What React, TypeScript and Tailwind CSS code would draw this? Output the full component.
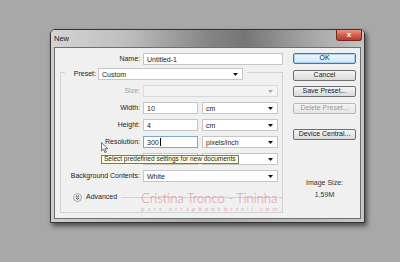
function Arrow({ disabled = false }: { disabled?: boolean }) {
  return (
    <svg width="5" height="3" viewBox="0 0 5 3" className="shrink-0">
      <path d="M0 0 L5 0 L2.5 3 Z" fill={disabled ? '#a8a8a8' : '#111'} />
    </svg>
  );
}

function Select({ value, w, disabled = false }: { value: string; w: string; disabled?: boolean }) {
  return (
    <div
      className={`${w} h-[12px] flex items-center justify-between pl-[3px] pr-[4px] border ${
        disabled ? 'bg-[#f4f4f4] border-[#dadada]' : 'bg-white border-[#c6c6c6]'
      }`}
    >
      <span className="leading-none">{value}</span>
      <Arrow disabled={disabled} />
    </div>
  );
}

function Field({ value, w, focused = false }: { value: string; w: string; focused?: boolean }) {
  return (
    <div
      className={`${w} h-[12px] flex items-center pl-[3px] bg-white border ${
        focused ? 'border-[#7fa8cc]' : 'border-[#c6c6c6]'
      }`}
    >
      <span className="leading-none">{value}</span>
      {focused && <span className="ml-[1px] w-px h-[8px] bg-black" />}
    </div>
  );
}

function Row({ label, children, muted = false }: { label: string; children: React.ReactNode; muted?: boolean }) {
  return (
    <div className="flex items-center h-[12px] gap-[3px]">
      <div className={`w-[79px] text-right ${muted ? 'text-[#a0a0a0]' : ''}`}>{label}</div>
      <div className="flex gap-[4px]">{children}</div>
    </div>
  );
}

function Btn({ label, primary = false, disabled = false, className = '' }: { label: string; primary?: boolean; disabled?: boolean; className?: string }) {
  return (
    <div
      className={`w-[63px] h-[11px] flex items-center justify-center rounded-[2px] border bg-gradient-to-b ${
        primary
          ? 'border-[#3d7bad] from-[#eef6fc] to-[#d3e6f4] shadow-[inset_0_0_0_1px_#a6d3ef]'
          : disabled
          ? 'border-[#b8b8b8] from-[#f4f4f4] to-[#e6e6e6] text-[#9a9a9a]'
          : 'border-[#707070] from-[#f5f5f5] to-[#dadada]'
      } ${className}`}
    >
      {label}
    </div>
  );
}

export default function App() {
  return (
    <div className="relative w-[400px] h-[262px] overflow-hidden bg-[#a8a8a8] font-['Liberation_Sans',Arial,sans-serif] text-[7px] text-[#1b1b1b]">
      {/* window */}
      <div className="absolute left-[50px] top-[29px] w-[315px] h-[194px] flex flex-col rounded-t-[5px] border border-[#343434] bg-gradient-to-r from-[#cdcdcd] via-[#a9a9a9] to-[#c6c6c6] shadow-[2px_3px_5px_rgba(0,0,0,0.55)]">
        <div className="h-[17px] shrink-0 flex items-start justify-between rounded-t-[4px] bg-[linear-gradient(to_right,#d4d4d4_0%,#bdbdbd_25%,#858585_50%,#767676_62%,#a4a4a4_82%,#c4c4c4_100%)]">
          <span className="pl-[3px] pt-[5px] text-[7.5px] leading-none text-[#1a1a1a]">New</span>
          <div className="mr-[2px] w-[26px] h-[11px] flex items-center justify-center rounded-b-[3px] border border-t-0 border-[#6e2a20] bg-gradient-to-b from-[#e79a8c] via-[#d2604b] to-[#b8392a] text-white text-[8px] font-bold leading-none">
            x
          </div>
        </div>

        <div className="flex-1 mx-[3px] mb-[3px] flex border border-[#6f6f6f] bg-[#f0f0f0]">
          {/* left column */}
          <div className="w-[228px] pl-[5px] pt-[5px] flex flex-col">
            <div className="flex items-center h-[12px] gap-[3px]">
              <div className="w-[80px] text-right">Name:</div>
              <Field value="Untitled-1" w="w-[140px]" />
            </div>

            <div className="mt-[7px] border border-[#cfd4d8] flex flex-col pb-[9px]">
              <div className="-mt-[5px] ml-[4px] self-start flex items-center gap-[2px] pl-[8px] pr-[4px] bg-[#f0f0f0]">
                <div className="w-[23px] text-right">Preset:</div>
                <Select value="Custom" w="w-[145px]" />
              </div>
              <div className="mt-[5px] flex flex-col gap-[5px]">
                <Row label="Size:" muted>
                  <Select value="" w="w-[135px]" disabled />
                </Row>
                <Row label="Width:">
                  <Field value="10" w="w-[55px]" />
                  <Select value="cm" w="w-[76px]" />
                </Row>
                <Row label="Height:">
                  <Field value="4" w="w-[55px]" />
                  <Select value="cm" w="w-[76px]" />
                </Row>
                <Row label="Resolution:">
                  <Field value="300" w="w-[55px]" focused />
                  <Select value="pixels/inch" w="w-[76px]" />
                </Row>
                {/* color mode row, mostly hidden under the tooltip */}
                <Row label="">
                  <Select value="" w="w-[55px]" />
                  <Select value="" w="w-[76px]" />
                </Row>
                <Row label="Background Contents:">
                  <Select value="White" w="w-[135px]" />
                </Row>
              </div>
              <div className="mt-[9px] h-[12px] flex items-center pl-[12px]">
                <svg width="9" height="9" viewBox="0 0 9 9" className="shrink-0">
                  <circle cx="4.5" cy="4.5" r="4" fill="#e8e8e8" stroke="#9c9c9c" strokeWidth="0.8" />
                  <path d="M3 2.6 L4.5 4 L6 2.6 M3 4.8 L4.5 6.2 L6 4.8" fill="none" stroke="#333" strokeWidth="0.9" />
                </svg>
                <span className="ml-[4px]">Advanced</span>
                <div className="ml-[4px] flex-1 h-px bg-[#d2d2d2]" />
              </div>
            </div>
          </div>

          {/* right column */}
          <div className="ml-[10px] pt-[5px] flex flex-col items-center w-[63px]">
            <Btn label="OK" primary />
            <Btn label="Cancel" className="mt-[6px]" />
            <Btn label="Save Preset..." className="mt-[5px]" />
            <Btn label="Delete Preset..." disabled className="mt-[6px]" />
            <Btn label="Device Central..." className="mt-[15px]" />
            <div className="mt-[38px] leading-[9px] text-[#333]">Image Size:</div>
            <div className="mt-[3px] leading-[9px] text-[#333]">1,59M</div>
          </div>
        </div>
      </div>

      {/* tooltip */}
      <div className="absolute left-[101px] top-[155px] h-[9px] flex items-center px-[2px] border border-[#767676] bg-[#ffffe1] text-[6.5px] leading-none whitespace-nowrap">
        Select predefined settings for new documents
      </div>

      {/* mouse pointer */}
      <svg className="absolute left-[101px] top-[142px]" width="8" height="12" viewBox="0 0 8 12">
        <path d="M0.5 0.5 L0.5 9 L2.6 7.1 L4 10.6 L5.4 10 L4 6.6 L6.8 6.6 Z" fill="#f4f4f4" stroke="#555" strokeWidth="0.8" />
      </svg>

      {/* watermark */}
      <div className="absolute left-[141px] top-[192px] flex flex-col items-start pointer-events-none">
        <span className="font-['Lato',sans-serif] font-light text-[13px] leading-[13px] text-[#d9959f]">
          Cristina Tronco - Tininha
        </span>
        <span className="font-['Lato',sans-serif] text-[6.5px] leading-[8px] tracking-[2.8px] text-[#e0b3b9]">
          para scrapbookbrasil.com
        </span>
      </div>
    </div>
  );
}
